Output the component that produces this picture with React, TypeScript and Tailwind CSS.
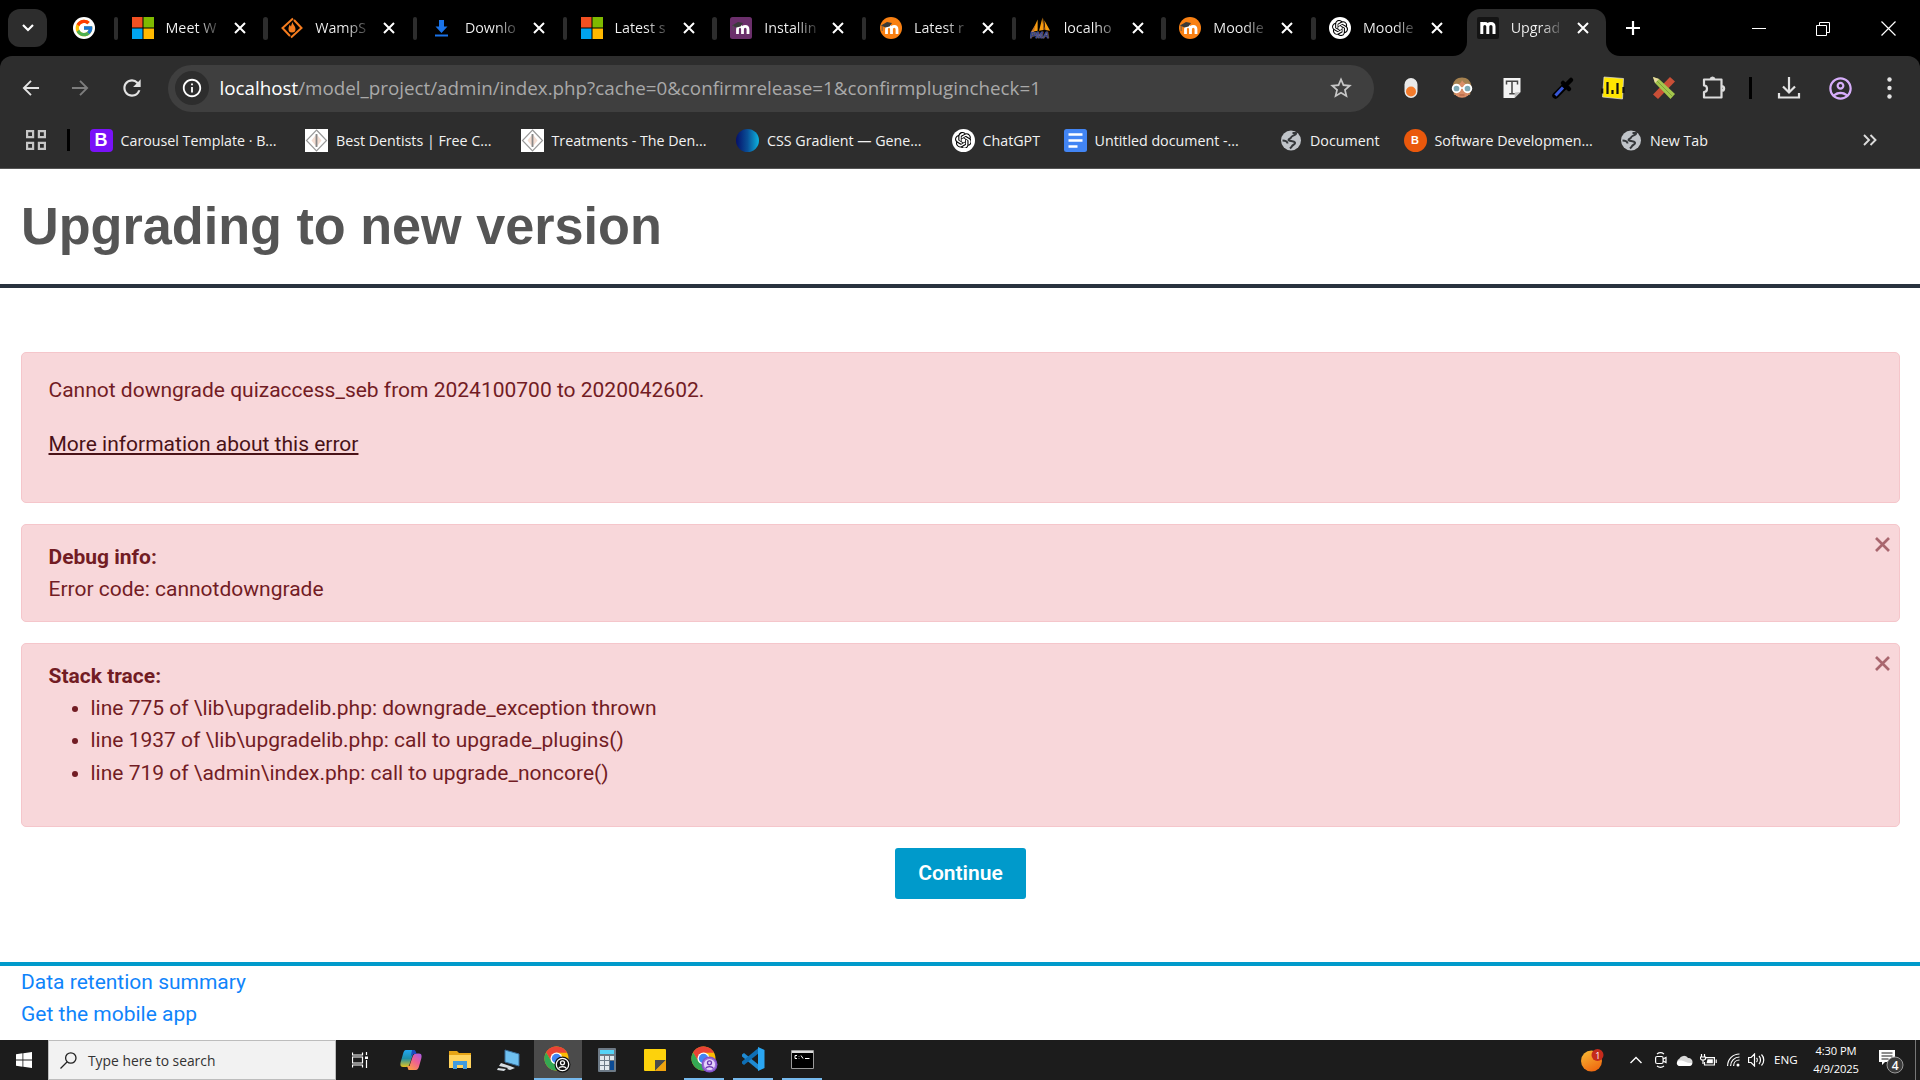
import type { ReactNode } from "react";
import { FcGoogle } from "react-icons/fc";
import { SiOpenai } from "react-icons/si";
import { MdRefresh, MdOutlineInfo, MdStarBorder, MdOutlineAccountCircle } from "react-icons/md";

const Microsoft = () => (
  <svg width="22" height="22" viewBox="0 0 22 22">
    <path fill="#f25022" d="M0 0h10.5v10.5H0z" />
    <path fill="#7fba00" d="M11.5 0H22v10.5H11.5z" />
    <path fill="#00a4ef" d="M0 11.5h10.5V22H0z" />
    <path fill="#ffb900" d="M11.5 11.5H22V22H11.5z" />
  </svg>
);

const Wamp = () => (
  <svg width="22" height="22" viewBox="0 0 22 22" fill="none" stroke="#f57c1f" strokeWidth="2">
    <path d="M12 1.500 1.500 11l7.500 8M10 20.500 20.500 11 13 3" />
    <path fill="#f57c1f" stroke="none" d="M11.500 5c.5 3 3 4 3 7a3.500 3.500 0 0 1-7 0c0-2 .8-3 1.300-4.500.4 1 .8 1.500 1.200 2C10.500 8 10.700 6.500 11.500 5z" />
  </svg>
);

const DownloadFav = () => (
  <svg width="22" height="22" viewBox="0 0 22 22" fill="#1a73e8">
    <path d="M8 3h5v6.500h3.500L10.500 16l-6-6.500H8zM4 17.500h13v2H4z" />
  </svg>
);

const MoodleM = ({ dx = 0 }: { dx?: number }) => (
  <g transform={`translate(${dx} 0)`}>
    <path d="M6.500 17v-4.500c0-4.300 5-4.300 5 0V17M11.500 12.500c0-4.300 5.500-4.300 5.500 0V17" fill="none" stroke="#fff" strokeWidth="2.800" />
    <path d="M1 8.500 7 5l5 1-2.500 3.500-4 1z" fill="#3a3a3a" />
    <path d="M2.200 8.500V14" stroke="#555" strokeWidth="0.800" />
  </g>
);

const MoodlePurple = () => (
  <svg width="22" height="22" viewBox="0 0 22 22">
    <rect width="22" height="22" rx="2.500" fill="#6b2f6b" />
    <MoodleM dx={1} />
  </svg>
);

const MoodleOrange = () => (
  <svg width="22" height="22" viewBox="0 0 22 22">
    <circle cx="11" cy="11" r="11" fill="#f98012" />
    <MoodleM />
  </svg>
);

const Pma = () => (
  <svg width="23" height="22" viewBox="0 0 23 22">
    <path fill="#f89c0e" d="M8 2 2 15l6-1zM13 0 9.500 14l4.500-1zM15 3l1 10 5 1z" />
    <path fill="#c0722a" d="M6 7 1 15h3zM13.500 0l.5 13 1.500-.5z" />
    <text x="0" y="21.500" fontFamily="Liberation Sans" fontSize="9" fontWeight="700" fontStyle="italic" fill="#3b4080" stroke="#c9cbe8" strokeWidth="0.500" paintOrder="stroke">PMA</text>
  </svg>
);

const Gpt = ({ size = 22 }: { size?: number }) => (
  <span className="flex shrink-0 items-center justify-center rounded-full bg-white text-black" style={{ width: size, height: size }}>
    <SiOpenai size={size * 0.73} />
  </span>
);

const MoodleDark = () => (
  <svg width="22" height="22" viewBox="0 0 22 22">
    <rect width="22" height="22" rx="2" fill="#141414" />
    <path d="M4.800 17V9.500c0-4 6-4 6 0V17M10.800 9.500c0-4 6.200-4 6.200 0V17M4.800 5v6" fill="none" stroke="#fff" strokeWidth="3" />
  </svg>
);

const Close = () => (
  <svg width="12" height="12" viewBox="0 0 12 12" stroke="#fff" strokeWidth="2" className="shrink-0">
    <path d="m1 1 10 10M11 1 1 11" />
  </svg>
);

const fade = "w-[52px] shrink-0 whitespace-nowrap bg-[linear-gradient(90deg,#f4f4f4_60%,#333_100%)] bg-clip-text text-[14.3px] leading-[22px] text-transparent";

const tabs: { icon: ReactNode; title: string }[] = [
  { icon: <Microsoft />, title: "Meet W" },
  { icon: <Wamp />, title: "WampS" },
  { icon: <DownloadFav />, title: "Downlo" },
  { icon: <Microsoft />, title: "Latest s" },
  { icon: <MoodlePurple />, title: "Installin" },
  { icon: <MoodleOrange />, title: "Latest r" },
  { icon: <Pma />, title: "localho" },
  { icon: <MoodleOrange />, title: "Moodle" },
  { icon: <Gpt />, title: "Moodle" },
];

function TabStrip() {
  return (
    <div className="flex h-[56px] items-start bg-black">
      <div className="ml-[8px] mt-[9px] flex h-[38px] w-[39px] items-center justify-center rounded-[12px] bg-[#2d2d2d]">
        <svg width="12" height="8" viewBox="0 0 12 8" fill="none" stroke="#fff" strokeWidth="2.200"><path d="m1 1 5 5 5-5" /></svg>
      </div>
      <div className="ml-[26px] mt-[17px] flex h-[22px] w-[22px] items-center justify-center rounded-full bg-white">
        <FcGoogle size={20} />
      </div>
      <div className="ml-[18.500px] flex pt-[16px]">
        {tabs.map((t, i) => (
          <div key={i} className="flex h-[24px] w-[149.700px] items-center">
            <div className="h-[23px] w-[4.500px] rounded-full bg-[#2d2d2d]" />
            <div className="ml-[13.500px] flex w-[22px] shrink-0">{t.icon}</div>
            <div className={"ml-[12px] " + fade}>{t.title}</div>
            <div className="ml-[16px]"><Close /></div>
          </div>
        ))}
      </div>
      <div className="-ml-[12px] flex h-[56px] items-end">
        <div className="h-[16px] w-[18px] bg-[#2d2d2d]"><div className="h-full w-full rounded-br-[14px] bg-black" /></div>
        <div className="mt-[9px] flex h-[47px] w-[139px] items-center rounded-t-[13px] bg-[#2d2d2d] pb-[9px] pl-[10px]">
          <MoodleDark />
          <div className={"ml-[12px] " + fade}>Upgrad</div>
          <div className="ml-[14px]"><Close /></div>
        </div>
        <div className="h-[16px] w-[18px] bg-[#2d2d2d]"><div className="h-full w-full rounded-bl-[14px] bg-black" /></div>
      </div>
      <svg className="ml-[2px] mt-[21px]" width="14" height="14" viewBox="0 0 14 14" stroke="#fff" strokeWidth="2.200"><path d="M7 0v14M0 7h14" /></svg>
      <div className="ml-auto mr-[24px] mt-[21px] flex items-center gap-[50px]">
        <svg width="14" height="14" viewBox="0 0 14 14"><path d="M0 6.500h14" stroke="#fff" /></svg>
        <svg width="15" height="14" viewBox="0 0 15 14" fill="none" stroke="#fff"><path d="M.5 3.500h10v10H.5zM3.500 3V.5h10v10H11" /></svg>
        <svg width="15" height="15" viewBox="0 0 15 15" stroke="#fff" strokeWidth="1.200"><path d="m.5.5 14 14M14.500.5l-14 14" /></svg>
      </div>
    </div>
  );
}

const extensions: ReactNode[] = [
  <svg key="a" width="24" height="24" viewBox="0 0 24 24"><rect x="5.500" y="2" width="13" height="20" rx="6.500" fill="#e9e9e9" /><circle cx="12" cy="15.500" r="5" fill="#f47b2b" /></svg>,
  <svg key="b" width="24" height="24" viewBox="0 0 24 24">
    <path d="M2.500 11C3 4.500 7 1.500 12 1.500s9 3 9.500 9.500L20 19H4z" fill="#a5814f" />
    <circle cx="12" cy="13" r="8.800" fill="#d98d67" /><path d="M12 3c-4 1-8 4-9 8l6-3c2-1 3-3 3-5zM12 3c4 1 8 4 9 8l-5-3c-2-1-4-3-4-5z" fill="#a5814f" />
    <circle cx="6.500" cy="12.500" r="3.800" fill="#7ea9b5" stroke="#fff" strokeWidth="1.900" /><circle cx="17.500" cy="12.500" r="3.800" fill="#7ea9b5" stroke="#fff" strokeWidth="1.900" /><path d="M10.400 12h3.200" stroke="#fff" strokeWidth="1.600" /><path d="M9.500 19h5" stroke="#a85a3c" />
  </svg>,
  <svg key="c" width="24" height="24" viewBox="0 0 24 24"><path fill="#f3f3f3" d="M3.500 2h17v14l-6 6h-11z" /><path fill="#bbb" d="m14.500 22 .5-5.500 5.500-.5z" /><path d="M6.500 8.500V5.200h11v3.300M12 5.500v12M9.300 17.700h5.400" stroke="#444" strokeWidth="1.500" fill="none" /></svg>,
  <svg key="d" width="24" height="24" viewBox="0 0 24 24"><path d="m4.500 19.500 9-9" stroke="#000" strokeWidth="6.500" strokeLinecap="round" /><path d="m4.500 19.500 7.500-8" stroke="#3857d8" strokeWidth="3" /><path d="m12 7 6 6M15 9l5-5" stroke="#000" strokeWidth="4.500" strokeLinecap="round" /></svg>,
  <svg key="e" width="24" height="24" viewBox="0 0 24 24"><path d="M3 1 22.500 2.500 21.500 23 1.500 21z" fill="#ffe600" stroke="#ddd" strokeWidth="0.700" /><path d="M1.200 12.500v5M6.500 6v12M11.500 14v4M16.500 7v11M22.500 11v6" stroke="#111" strokeWidth="2.200" /></svg>,
  <svg key="f" width="24" height="24" viewBox="0 0 24 24"><path d="M18 1l5 4.500L6 23l-5-4.500z" fill="#c94f37" /><path d="M1 1l6 2 16 15-4.500 5L3 7z" fill="#a4c64c" /><path d="m5 5 15.500 15.500" stroke="#7fa03a" /><path d="M1 1l6 2-4 4z" fill="#e9d9a0" /></svg>,
  <svg key="g" width="24" height="24" viewBox="0 0 24 24" fill="none" stroke="#dcdcdc" strokeWidth="2.200"><path d="M2 3.500h17.500v18H2v-5.500c4 0 4-6.500 0-6.500zM19.500 10c3.500 0 3.500 5 0 5" strokeLinejoin="round" /><path d="M8 3.500a2.500 2.500 0 0 1 5 0z" fill="#dcdcdc" strokeWidth="1" /></svg>,
];

function Toolbar() {
  return (
    <div className="bg-black">
      <div className="flex h-[64px] items-center rounded-t-[12px] bg-[#2d2d2d]">
        <svg className="ml-[22px]" width="18" height="18" viewBox="0 0 19 18" fill="none" stroke="#e3e3e3" strokeWidth="2"><path d="M18 9H2M9.500 1.500 2 9l7.500 7.500" /></svg>
        <svg className="ml-[31px]" width="18" height="18" viewBox="0 0 19 18" fill="none" stroke="#7d7d7d" strokeWidth="2"><path d="M1 9h16M9.500 1.500 17 9l-7.500 7.500" /></svg>
        <MdRefresh className="ml-[30px]" size={26} color="#e3e3e3" />
        <div className="ml-[23px] flex h-[47px] w-[1206px] items-center rounded-full bg-[#3f3f3f] pl-[7px]">
          <div className="flex h-[34px] w-[34px] items-center justify-center rounded-full bg-[#2d2d2d]">
            <MdOutlineInfo size={22} color="#fff" />
          </div>
          <div className="ml-[10.500px] w-[900px] whitespace-nowrap text-[18.790px] leading-[26px] text-[#a9a9a9]"><span className="text-white">localhost</span>/model_project/admin/index.php?cache=0&amp;confirmrelease=1&amp;confirmplugincheck=1</div>
          <MdStarBorder className="ml-auto mr-[20px]" size={26} color="#c7c7c7" />
        </div>
        <div className="ml-[25px] flex gap-[26.500px]">{extensions}</div>
        <div className="ml-[23px] h-[22px] w-[3px] bg-black" />
        <svg className="ml-[25px]" width="24" height="24" viewBox="0 0 24 24" fill="none" stroke="#e3e3e3" strokeWidth="2.200"><path d="M12 1v15M6 10.500l6 6 6-6M2 17v4.500h20V17" /></svg>
        <MdOutlineAccountCircle className="ml-[25.500px]" size={27} color="#d7aefb" />
        <svg className="ml-[33.500px]" width="5" height="22" viewBox="0 0 5 22" fill="#e3e3e3"><circle cx="2.500" cy="2.500" r="2.200" /><circle cx="2.500" cy="11" r="2.200" /><circle cx="2.500" cy="19.500" r="2.200" /></svg>
      </div>
    </div>
  );
}

const Dentist = () => (
  <svg width="23" height="23" viewBox="0 0 23 23"><path fill="#fff" d="M0 0h23v23H0z" /><path d="m11.500 1 10 10.500-10 10.500-10-10.500z" fill="none" stroke="#999" strokeWidth="1.200" /><path d="m11.500 5 5 6.500-5 6.500-5-6.500z" fill="#f3ddd2" /><path d="M11.500 5v13" stroke="#888" strokeWidth="1.800" /></svg>
);

const Globe = () => (
  <svg width="23" height="23" viewBox="0 0 23 23"><circle cx="12" cy="11.500" r="10" fill="#bfc3c8" /><path d="M13.500 4h3.500c.8 2-4.500 2.500-5 4.500-.3 1.500-2.500 1-2.500 2.500s5.500.5 6.500 2.500c.8 2-2.500 2-3.500 4.500l-1.500 1.500M3.500 11.500c3 0 5 1.500 5 3" fill="none" stroke="#34373a" strokeWidth="2" /></svg>
);

const bookmarks: { w: string; icon: ReactNode; label: string }[] = [
  { w: "w-[215.500px]", icon: <div className="flex h-[23px] w-[23px] items-center justify-center rounded-[4px] bg-[#7a12f8] font-['Liberation_Sans'] text-[18px] font-bold text-white">B</div>, label: "Carousel Template · B..." },
  { w: "w-[215.500px]", icon: <Dentist />, label: "Best Dentists | Free C..." },
  { w: "w-[215.500px]", icon: <Dentist />, label: "Treatments - The Den..." },
  { w: "w-[215.500px]", icon: <div className="h-[23px] w-[23px] rounded-full bg-[linear-gradient(90deg,#05106a,#0a4f96_50%,#0db3e0)]" />, label: "CSS Gradient — Gene..." },
  { w: "w-[112px]", icon: <Gpt size={23} />, label: "ChatGPT" },
  { w: "w-[215.500px]", icon: <svg width="23" height="23" viewBox="0 0 23 23"><rect width="23" height="23" rx="2.500" fill="#4285f4" /><path d="M4.500 5.500h14M4.500 11.500h14M4.500 17.500h9" stroke="#fff" strokeWidth="2.400" /></svg>, label: "Untitled document -..." },
  { w: "w-[124.500px]", icon: <Globe />, label: "Document" },
  { w: "w-[215.500px]", icon: <div className="flex h-[23px] w-[23px] items-center justify-center rounded-full bg-[#ea580c] font-['Liberation_Sans'] text-[11px] font-bold text-white">B</div>, label: "Software Developmen..." },
  { w: "w-[120px]", icon: <Globe />, label: "New Tab" },
];

function Bookmarks() {
  return (
    <div className="flex h-[49px] items-center border-b border-[#555] bg-[#2d2d2d] pb-[8px]">
      <svg className="ml-[26px] shrink-0" width="20" height="20" viewBox="0 0 20 20" fill="none" stroke="#c7c7c7" strokeWidth="2.200"><path d="M1.100 1.100h6v6h-6zM12.900 1.100h6v6h-6zM1.100 12.900h6v6h-6zM12.900 12.900h6v6h-6z" /></svg>
      <div className="ml-[21px] h-[22px] w-[3px] bg-black" />
      <div className="ml-[19.500px] flex">
        {bookmarks.map((b) => (
          <div key={b.label} className={"flex shrink-0 items-center whitespace-nowrap " + b.w}>
            {b.icon}
            <span className="ml-[8px] pt-[1px] text-[14.250px] leading-[22px] text-[#f2f2f2]">{b.label}</span>
          </div>
        ))}
      </div>
      <svg className="ml-auto mr-[43px]" width="14" height="12" viewBox="0 0 14 12" fill="none" stroke="#dcdcdc" strokeWidth="1.900"><path d="m1 1 5 5-5 5M7.500 1l5 5-5 5" /></svg>
    </div>
  );
}

const alertBox = "relative rounded-[5px] border border-[#f5c6cb] bg-[#f8d7da] pl-[26.500px] text-[#721c24]";

const AlertClose = () => (
  <svg className="absolute right-[9.500px] top-[12px]" width="15" height="15" viewBox="0 0 15 15" stroke="#a9666e" strokeWidth="2.700"><path d="m1 1 13 13M14 1 1 14" /></svg>
);

function Page() {
  return (
    <main className="h-[871px] overflow-hidden bg-white font-[Roboto] text-[21px] leading-[32.400px]">
      <header className="h-[119px] border-b-4 border-[#29323e] pl-[21px] pt-[25px]">
        <h1 className="font-['Liberation_Sans'] text-[52.200px] font-bold leading-[64px] text-[#555]">Upgrading to new version</h1>
      </header>
      <div className="mx-[20px] ml-[21px] mt-[64px] flex flex-col gap-[21px]">
        <section className={alertBox + " h-[151px] pt-[20.500px]"}>
          <p>Cannot downgrade quizaccess_seb from 2024100700 to 2020042602.</p>
          <p className="mt-[22px]"><a className="text-[#491217] underline">More information about this error</a></p>
        </section>
        <section className={alertBox + " h-[98px] pt-[15.750px]"}>
          <strong className="block font-bold">Debug info:</strong>
          Error code: cannotdowngrade
          <AlertClose />
        </section>
        <section className={alertBox + " h-[184px] pt-[15.500px]"}>
          <strong className="block font-bold">Stack trace:</strong>
          <ul className="list-disc pl-[42px]">
            <li>line 775 of \lib\upgradelib.php: downgrade_exception thrown</li>
            <li>line 1937 of \lib\upgradelib.php: call to upgrade_plugins()</li>
            <li>line 719 of \admin\index.php: call to upgrade_noncore()</li>
          </ul>
          <AlertClose />
        </section>
        <button className="h-[51px] w-[131px] self-center rounded-[3px] bg-[#009acb] font-semibold text-white">Continue</button>
      </div>
      <footer className="mt-[63px] flex flex-col border-t-4 border-[#009acb] pl-[21px] text-[#0f84fb]">
        <a>Data retention summary</a>
        <a>Get the mobile app</a>
      </footer>
    </main>
  );
}

const ChromeIcon = ({ dark }: { dark: boolean }) => (
  <svg width="27" height="27" viewBox="0 0 27 27">
    <circle cx="12.500" cy="12.500" r="12" fill="#fbbc04" />
    <path d="M2.100 6.500A12 12 0 0 1 23 6.800H12.500L7 15z" fill="#ea4335" />
    <path d="M2.100 6.500A12 12 0 0 0 12.500 24.500l5-9H7.500z" fill="#34a853" />
    <circle cx="12.500" cy="12.500" r="6" fill="#fff" /><circle cx="12.500" cy="12.500" r="4.700" fill="#4285f4" />
    <circle cx="18.500" cy="18.500" r="8" fill={dark ? "#111" : "#8250c8"} />
    <circle cx="18.500" cy="18.500" r="6.200" fill={dark ? "#111" : "#e5d3fb"} stroke={dark ? "#fff" : "#9a6cd8"} strokeWidth="1.300" />
    <circle cx="18.500" cy="16.800" r="2" fill="none" stroke={dark ? "#fff" : "#6a35b0"} strokeWidth="1.300" />
    <path d="M14.500 22.500c1.500-2.500 6.500-2.500 8 0" fill="none" stroke={dark ? "#fff" : "#6a35b0"} strokeWidth="1.300" />
  </svg>
);

const apps: { icon: ReactNode; state?: "open" | "active" }[] = [
  { icon: (
    <svg width="24" height="24" viewBox="0 0 24 24">
      <defs>
        <linearGradient id="cpA" x1="0" y1="0" x2="0" y2="1"><stop offset="0" stopColor="#22a7f2" /><stop offset=".5" stopColor="#1d8fa8" /><stop offset="1" stopColor="#e7c51c" /></linearGradient>
        <linearGradient id="cpB" x1="1" y1="0" x2="0.300" y2="1"><stop offset="0" stopColor="#a45be8" /><stop offset=".5" stopColor="#ee5f95" /><stop offset="1" stopColor="#fb9a4a" /></linearGradient>
      </defs>
      <path d="M7 2h8l2 4h-3l-3 9c-1 3-2 4-4 4H4c-3 0-3-3-2-6l2-7c.7-2.500 1.500-4 3-4z" fill="url(#cpA)" />
      <path d="M17 22H9.500L8 18h2.500l3-9c1-3 2-3.500 4-3.500H20c3 0 3 3 2 6l-2 7c-.7 2.300-1.500 3.500-3 3.500z" fill="url(#cpB)" />
      <path d="M13 2h2c1.500 0 2 2 2.500 4h-2c-2 0-3 1-4 4z" fill="#1a4bc0" />
    </svg>) },
  { icon: <svg width="22" height="20" viewBox="0 0 22 20"><path d="M0 1h8l2 2h12v5H0z" fill="#e6a416" /><path d="M0 5h22v13H0z" fill="#ffd35e" /><path d="M4 19v-8h14v8h-4v-4H8v4z" fill="#3f9be0" /></svg> },
  { icon: <svg width="23" height="23" viewBox="0 0 23 23"><path d="m8 1 14 4v12L8 13z" fill="#6fc0f0" stroke="#3b6f9c" /><path d="M4 14l9 3-2 2-9-2zM1 19l8 1-2 2-7-1zM13 17l5 2-5 2-3-1z" fill="#d7dde2" /></svg> },
  { icon: <ChromeIcon dark />, state: "active" },
  { icon: <svg width="18" height="24" viewBox="0 0 18 24"><rect width="18" height="24" rx="1" fill="#6d7a86" /><path fill="#55d3f7" d="M2 2h14v4H2z" /><path fill="#e2e8ed" d="M2 8h4v4H2zM7 8h4v4H7zM12 8h4v4h-4zM2 13h4v4H2zM7 13h4v4H7zM2 18h4v4H2zM7 18h4v4H7z" /><path fill="#0b4b95" d="M12 13h4v9h-4z" /></svg> },
  { icon: <svg width="22" height="22" viewBox="0 0 22 22"><rect width="22" height="22" rx="1" fill="#fdd20c" /><path d="M11 22V11h11z" fill="#4a4a4a" /><path d="M11 22 22 11v11z" fill="#f0a30e" /></svg> },
  { icon: <ChromeIcon dark={false} />, state: "open" },
  { icon: <svg width="24" height="24" viewBox="0 0 24 24"><path d="M1 7.500 3 6l15 12v5.500L1 9.500z" fill="#1f8ad2" /><path d="M1 16.500 3 18 18 6V.5L1 14.500z" fill="#0f6fb5" /><path d="m17 0 6.500 3v18L17 24z" fill="#2aa6f2" /></svg>, state: "open" },
  { icon: <svg width="23" height="19" viewBox="0 0 23 19"><path d="M.5.500h22v18H.5z" fill="#000" stroke="#9a9a9a" /><path d="M1 1h21v2H1z" fill="#ddd" /><path d="M6 5.500H4v3h2M8 6v.5M8 8v.500M10 5.500l2 3M14 8.500h4.500" stroke="#fff" fill="none" /></svg>, state: "open" },
];

function Taskbar() {
  return (
    <div className="flex h-[40px] items-center bg-[#1c1c1c] text-white">
      <svg className="ml-[16px]" width="16" height="16" viewBox="0 0 16 16" fill="#fff"><path d="M0 2.200 6.500 1.300v6.200H0zM7.300 1.200 16 0v7.500H7.300zM0 8.400h6.500v6.300L0 13.800zM7.300 8.400H16V16l-8.700-1.200z" /></svg>
      <div className="ml-[16px] flex h-full w-[288px] items-center border border-[#bdbdbd] bg-[#f2f2f2] pl-[11px]">
        <svg width="17" height="17" viewBox="0 0 17 17" fill="none" stroke="#222" strokeWidth="1.300"><circle cx="10.800" cy="6" r="5.200" /><path d="M7 10 .5 16.500" /></svg>
        <span className="ml-[11px] pt-[2px] text-[13.850px] text-[#333]">Type here to search</span>
      </div>
      <svg className="ml-[16px]" width="17" height="16" viewBox="0 0 17 16" fill="none" stroke="#fff" strokeWidth="1.200"><path d="M.5.500v2.500h10V.5M.5 15.500V13h10v2.500M.5 5h10v6H.5zM14.500 0v3M14.500 8v8" /><path d="M13 4.500h3v2.500h-3z" fill="#fff" stroke="none" /></svg>
      <div className="ml-[17.500px] flex h-full">
        {apps.map((a, i) => (
          <div key={i} className="flex h-full w-[48.900px] justify-center">
            <div className={"flex h-full flex-col items-center " + (a.state === "active" ? "w-[48px] bg-[#4b4b4b]" : "w-[40px]")}>
              <div className="flex flex-1 items-center">{a.icon}</div>
              {a.state && <div className="h-[2px] w-full bg-[#76b9ed]" />}
            </div>
          </div>
        ))}
      </div>
      <svg className="ml-auto" width="23" height="23" viewBox="0 0 23 23">
        <defs><linearGradient id="sun" x1="0.200" y1="0" x2="0.700" y2="1"><stop offset="0" stopColor="#f7b733" /><stop offset="1" stopColor="#f0660f" /></linearGradient></defs>
        <circle cx="10.500" cy="12" r="10.500" fill="url(#sun)" /><circle cx="16.500" cy="6" r="6" fill="#c42b1c" />
        <text x="14.300" y="9.500" fontFamily="Open Sans" fontSize="9" fill="#fff">1</text>
      </svg>
      <svg className="ml-[26px]" width="12" height="8" viewBox="0 0 12 8" fill="none" stroke="#fff" strokeWidth="1.400"><path d="m.5 7 5.500-5.500L11.500 7" /></svg>
      <svg className="ml-[13px]" width="12" height="16" viewBox="0 0 12 16" fill="none" stroke="#fff" strokeWidth="1.200"><rect x=".6" y="4.500" width="7.500" height="7" rx="1.500" /><path d="m8 7 3-1.500v5L8 9M2 2c2-1.500 5-1.500 7 0M2 14c2 1.500 5 1.500 7 0" /></svg>
      <svg className="ml-[9px]" width="17" height="11" viewBox="0 0 17 11"><path d="M4 11a4 4 0 0 1-.5-7.500A5 5 0 0 1 12 3a4 4 0 0 1 4.500 4.500C16.500 10 15 11 13 11z" fill="#d9d9d9" /><path d="M3 11c-3-1-3-5 .5-5.500C8 5 9 8 16 8c0 2-1.500 3-3 3z" fill="#fff" /></svg>
      <svg className="ml-[7px]" width="17" height="13" viewBox="0 0 17 13" fill="none" stroke="#fff" strokeWidth="1.200"><path d="M6 3.600h8.400v7.400H4.500V8" /><path d="M7.500 5.300h5.300v4H6.500z" fill="#fff" stroke="none" /><path d="M1.500 0v2.500M4.500 0v2.500M.5 3h5v1.500C5.500 6.500.5 6.500.5 4.500zM3 6v4M16.200 5.500v3.500" /></svg>
      <svg className="ml-[10px]" width="13" height="14" viewBox="0 0 13 14" fill="none" stroke="#fff" strokeWidth="1.200"><path d="M.6 13C.6 6 6 1 12.500 1M3.600 13c0-5 4-9 8.900-9M6.600 13c0-3.500 2.500-6 5.900-6" /><circle cx="11" cy="12" r="1.500" fill="#fff" stroke="none" /></svg>
      <svg className="ml-[8px]" width="17" height="14" viewBox="0 0 17 14" fill="none" stroke="#fff" strokeWidth="1.200"><path d="M.6 4.500h2.500L6.500 1v12L3.100 9.500H.6zM8.500 5c1 1 1 3 0 4M11 3c2 2 2 6 0 8M13.500 1.500c3 3 3 8 0 11" /></svg>
      <span className="ml-[9.500px] w-[24px] text-[11.600px]">ENG</span>
      <div className="ml-[14px] w-[48px] text-center text-[11.200px] leading-[18px] tracking-[-0.010em]"><div>4:30 PM</div><div>4/9/2025</div></div>
      <svg className="ml-[19px]" width="26" height="28" viewBox="0 0 26 28"><path d="M0 4h16v12H6l-3 3v-3H0z" fill="#fff" /><path d="M2.500 7h11M2.500 10h11M2.500 13h7" stroke="#1c1c1c" strokeWidth="1.200" /><circle cx="16" cy="19" r="8" fill="#3a3a3a" stroke="#999" /><text x="12.700" y="23.500" fontFamily="Open Sans" fontSize="12" fontWeight="600" fill="#fff">4</text></svg>
      <div className="ml-[10px] mr-[4px] h-full w-px bg-[#777]" />
    </div>
  );
}

export default function App() {
  return (
    <div className="flex h-[1080px] w-[1920px] flex-col overflow-hidden font-['Open_Sans',sans-serif]">
      <TabStrip />
      <Toolbar />
      <Bookmarks />
      <Page />
      <Taskbar />
    </div>
  );
}
